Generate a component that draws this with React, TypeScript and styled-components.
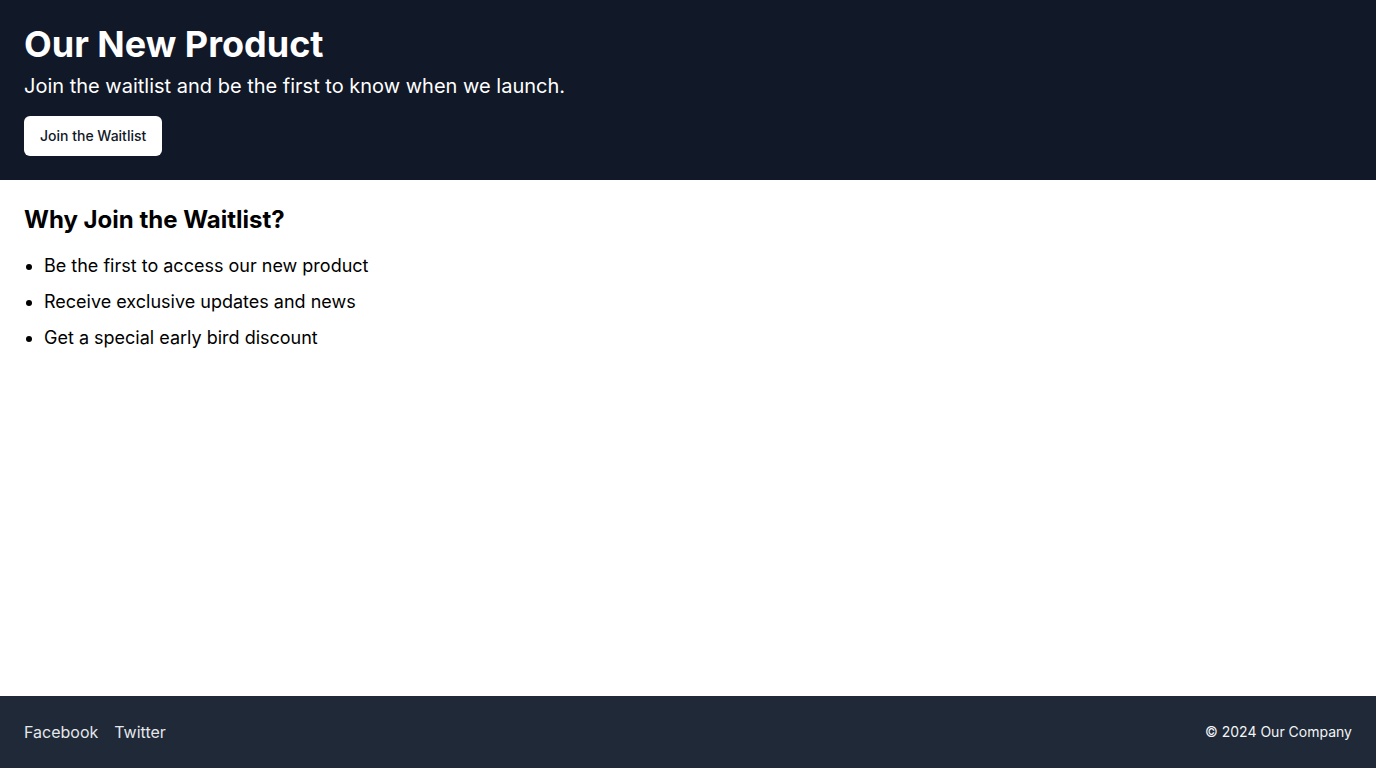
import React from "react";
import styled, { createGlobalStyle } from "styled-components";

const Global = createGlobalStyle`
  * { box-sizing: border-box; }
  html, body { margin: 0; padding: 0; }
  body { font-family: Inter, "Noto Sans", sans-serif; color: #000; background: #fff; }
`;

const Page = styled.div`
  min-height: 100vh;
  display: flex;
  flex-direction: column;
`;

const Hero = styled.header`
  background: #111827;
  color: #fff;
  padding: 24px;
  display: flex;
  flex-direction: column;
  align-items: flex-start;
`;

const Title = styled.h1`
  margin: 0;
  font-size: 36px;
  line-height: 40px;
  font-weight: 700;
`;

const Subtitle = styled.p`
  margin: 8px 0 0;
  font-size: 20px;
  line-height: 28px;
`;

const CTA = styled.button`
  margin-top: 16px;
  background: #fff;
  color: #111827;
  border: none;
  border-radius: 6px;
  padding: 10px 16px;
  font-family: inherit;
  font-size: 14px;
  line-height: 20px;
  font-weight: 500;
  cursor: pointer;
`;

const Main = styled.main`
  flex: 1;
  padding: 24px;
`;

const Heading = styled.h2`
  margin: 0 0 16px;
  font-size: 24px;
  line-height: 32px;
  font-weight: 700;
`;

const List = styled.ul`
  margin: 0;
  padding-left: 20px;
  list-style: disc;
`;

const Item = styled.li`
  font-size: 18px;
  line-height: 28px;
  margin-bottom: 8px;
`;

const Footer = styled.footer`
  background: #1f2937;
  color: #fff;
  padding: 24px;
  display: flex;
  justify-content: space-between;
  align-items: center;
`;

const Links = styled.nav`
  display: flex;
  gap: 16px;
`;

const FooterLink = styled.a`
  color: #e5e7eb;
  text-decoration: none;
  font-size: 16px;
  line-height: 24px;
`;

const Copy = styled.p`
  margin: 0;
  font-size: 14px;
  line-height: 20px;
  color: #f3f4f6;
`;

export default function App() {
  const perks = [
    "Be the first to access our new product",
    "Receive exclusive updates and news",
    "Get a special early bird discount",
  ];
  return (
    <>
      <Global />
      <Page>
        <Hero>
          <Title>Our New Product</Title>
          <Subtitle>Join the waitlist and be the first to know when we launch.</Subtitle>
          <CTA>Join the Waitlist</CTA>
        </Hero>
        <Main>
          <Heading>Why Join the Waitlist?</Heading>
          <List>
            {perks.map((p) => (
              <Item key={p}>{p}</Item>
            ))}
          </List>
        </Main>
        <Footer>
          <Links>
            <FooterLink href="#">Facebook</FooterLink>
            <FooterLink href="#">Twitter</FooterLink>
          </Links>
          <Copy>© 2024 Our Company</Copy>
        </Footer>
      </Page>
    </>
  );
}
